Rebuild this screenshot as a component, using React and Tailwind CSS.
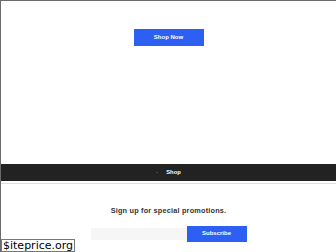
export default function App() {
  return (
    <div className="relative h-[252px] w-[336px] overflow-hidden border-l border-t border-[#6b6b6b] bg-white font-['Liberation_Sans',Arial,sans-serif]">
      <div className="flex h-[163px] justify-center pt-[28px]">
        <button className="h-[17px] w-[70px] bg-[#2d5ff2] text-[6px] font-bold text-white">
          Shop Now
        </button>
      </div>

      <nav className="flex h-[17px] items-center justify-center gap-[8px] bg-[#222222] text-[5.8px] font-bold text-white">
        <span className="text-[#888]">·</span>
        <span>Shop</span>
      </nav>
      <div className="mt-[2px] h-[1px] bg-[#dedede]" />

      <section className="flex flex-col items-center pt-[22px]">
        <p className="text-[7.3px] font-bold tracking-[0.2px] text-[#333]">
          Sign up for special promotions.
        </p>
        <div className="mt-[9px] flex items-center">
          <input className="h-[12px] w-[96px] bg-[#f6f6f6] outline-none" />
          <button className="h-[16px] w-[60px] bg-[#2d5ff2] text-[6px] font-bold text-white">
            Subscribe
          </button>
        </div>
      </section>
      <div className="mt-[11px] h-[1px] bg-[#dcdcdc]" />

      <div className="absolute bottom-0 left-0 border border-[#777] bg-white px-[1px] font-['DejaVu_Sans',sans-serif] text-[11px] leading-[11px] text-black">
        $iteprice.org
      </div>
    </div>
  );
}
